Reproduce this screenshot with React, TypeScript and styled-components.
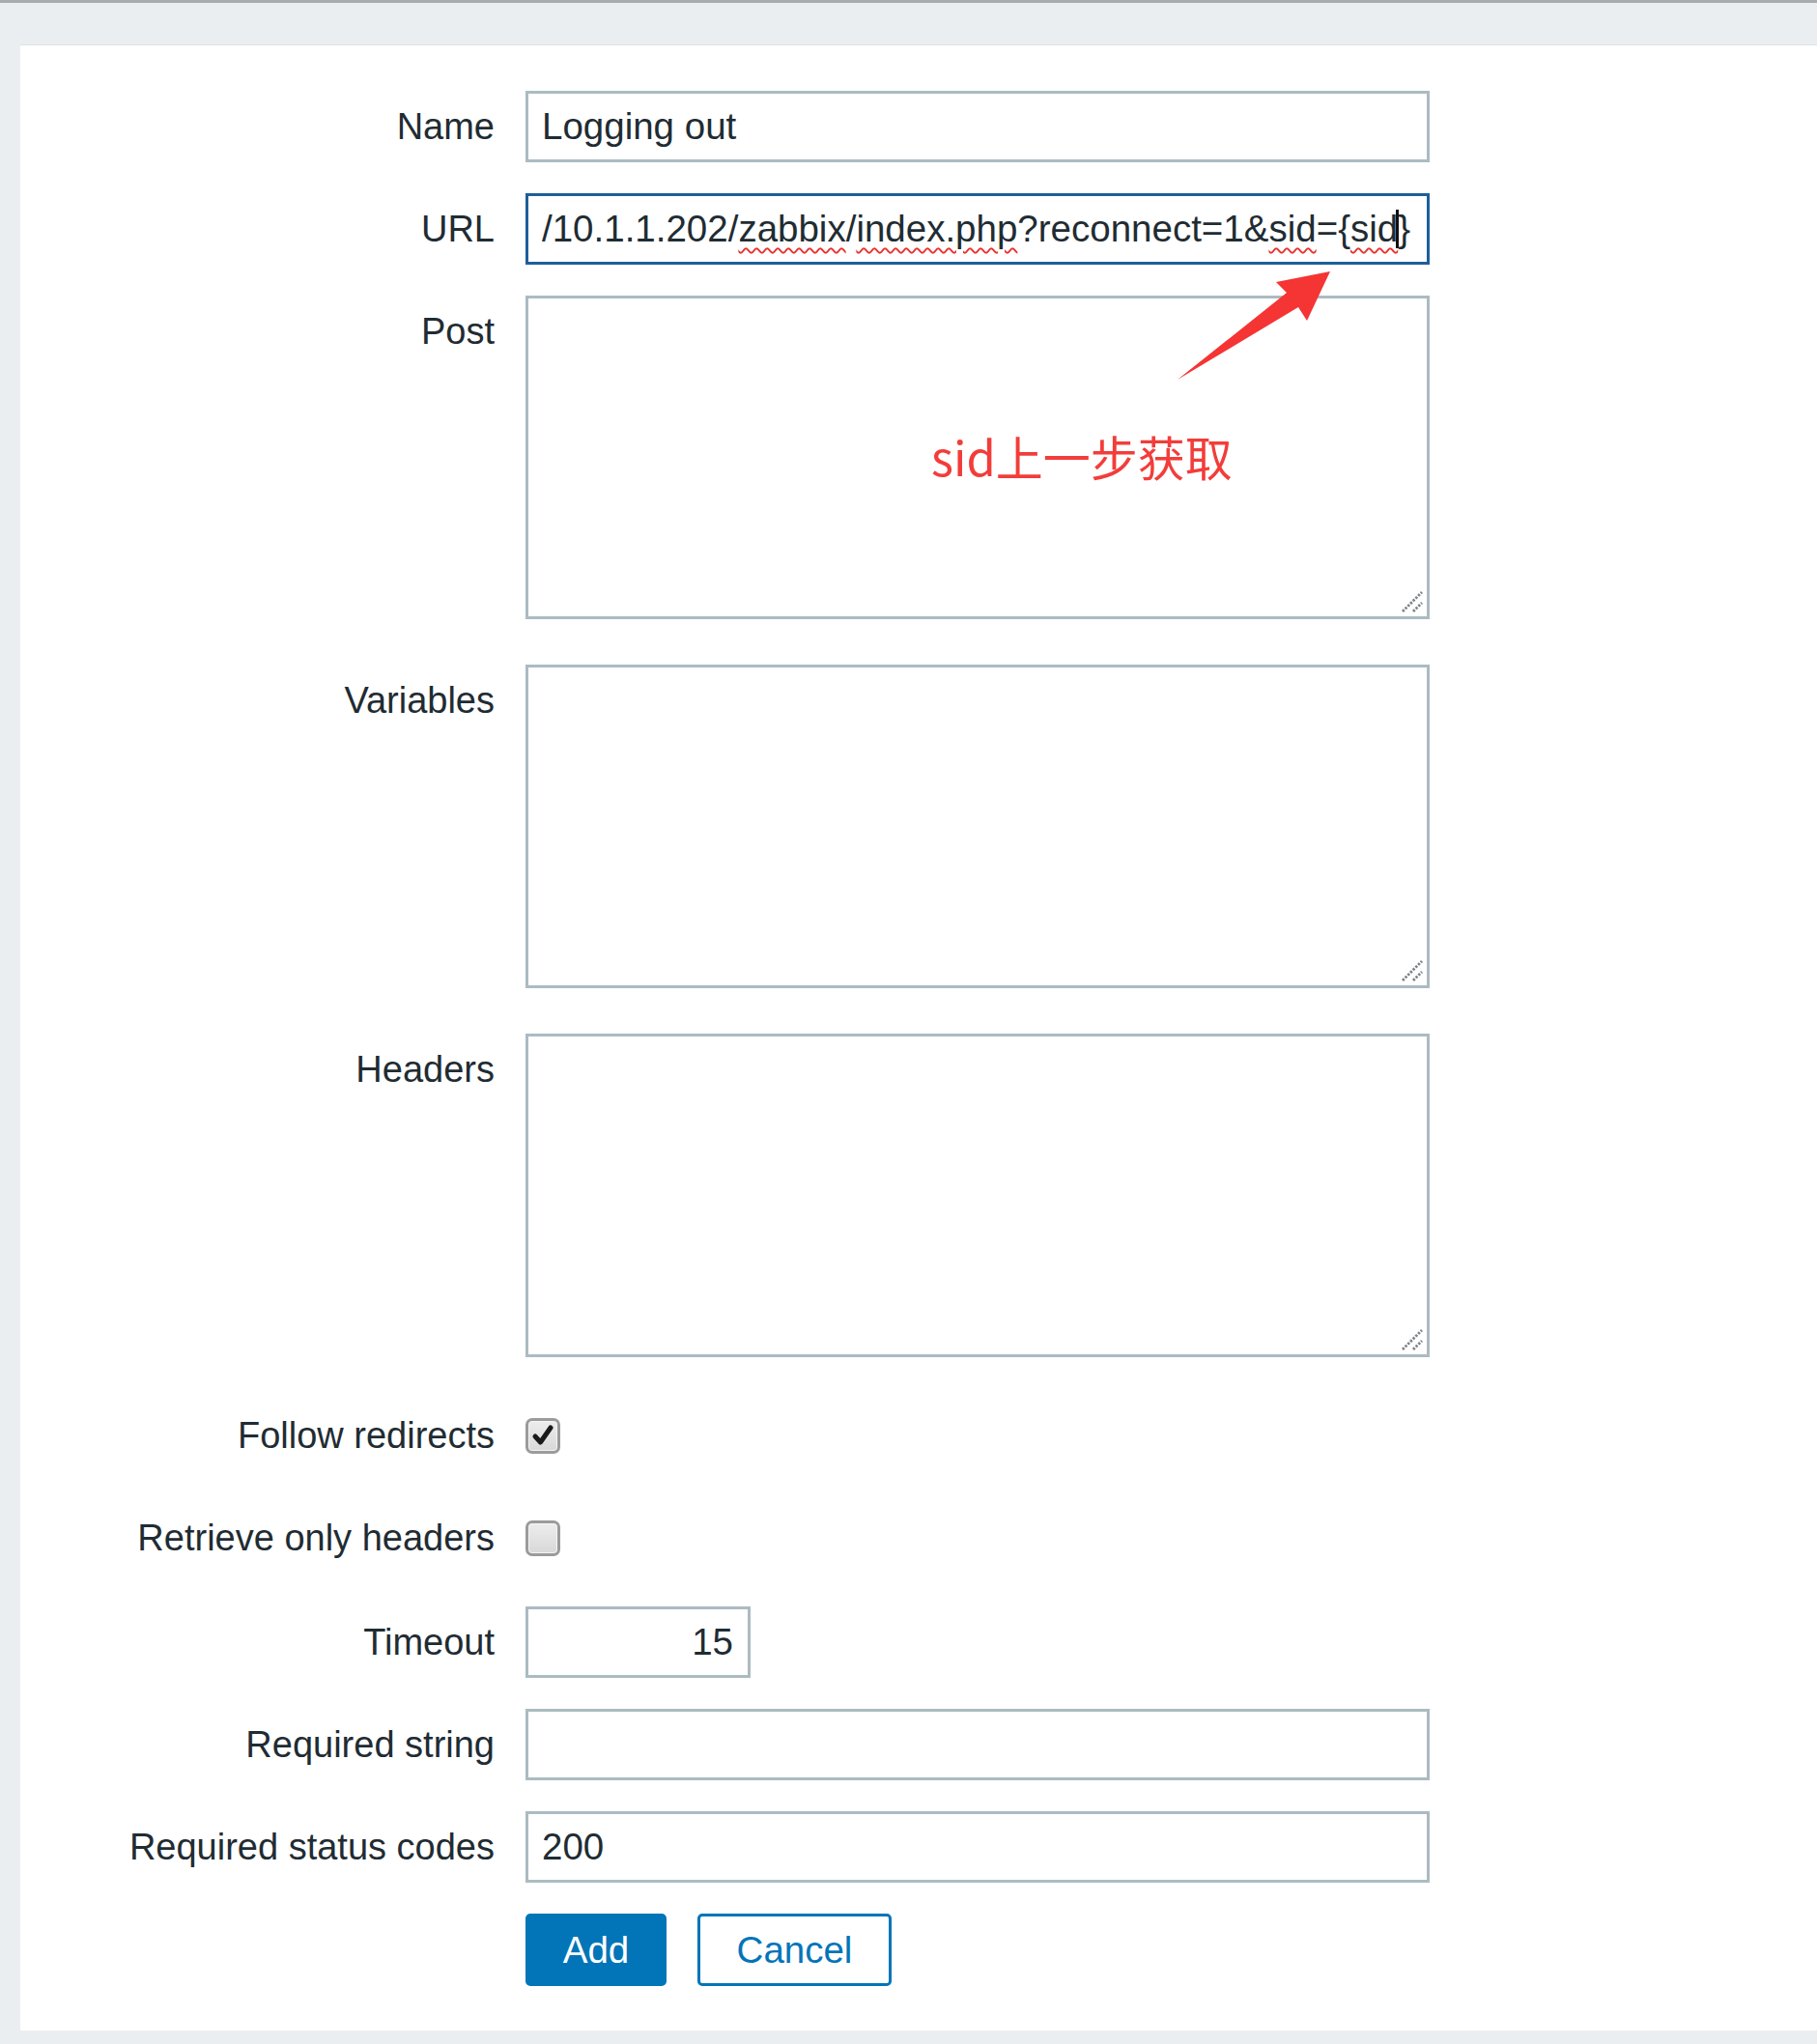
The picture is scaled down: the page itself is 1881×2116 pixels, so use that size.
import React from "react";
import styled, { createGlobalStyle } from "styled-components";

const GlobalStyle = createGlobalStyle`
  html, body {
    margin: 0;
    padding: 0;
    background: #ebeef0;
  }
  body {
    font-family: "Liberation Sans", Arial, sans-serif;
    color: #1f2c33;
  }
  * { box-sizing: border-box; }
`;

const Root = styled.div`
  position: relative;
  width: 1881px;
  min-height: 2116px;
`;

const TopLine = styled.div`
  height: 3px;
  background: #a9acae;
`;

const Page = styled.div`
  padding: 43px 0 13px 21px;
`;

const Panel = styled.div`
  background: #ffffff;
  border-top: 1px solid #dde2e5;
  padding: 47px 0 46px 0;
`;

const Form = styled.div`
  display: flex;
  flex-direction: column;
  gap: 32px;
`;

const Row = styled.div<{ $tall?: boolean; $extra?: number }>`
  display: grid;
  grid-template-columns: 491px 936px;
  column-gap: 32px;
  align-items: ${(p) => (p.$tall ? "start" : "center")};
  margin-bottom: ${(p) => (p.$extra ?? 0)}px;
`;

const Label = styled.div`
  text-align: right;
  font-size: 38px;
  line-height: 74px;
  color: #1f2c33;
  white-space: nowrap;
`;

const TextInput = styled.div<{ $focused?: boolean; $width?: number; $right?: boolean }>`
  width: ${(p) => (p.$width ? `${p.$width}px` : "100%")};
  height: 74px;
  border: 3px solid ${(p) => (p.$focused ? "#1d5f9c" : "#acbbc2")};
  background: #ffffff;
  display: flex;
  align-items: center;
  justify-content: ${(p) => (p.$right ? "flex-end" : "flex-start")};
  padding: 0 15px 0 14px;
  font-size: 38.5px;
  color: #1f2c33;
  white-space: nowrap;
  overflow: hidden;
`;

const Misspelled = styled.span`
  text-decoration: underline wavy #e8322e;
  text-decoration-thickness: 2px;
  text-underline-offset: 6px;
`;

const Caret = styled.span`
  display: inline-block;
  width: 0;
  height: 40px;
  border-left: 3px solid #111;
  vertical-align: middle;
  margin: 0 -1px 0 -2px;
`;

const TextArea = styled.div`
  position: relative;
  width: 936px;
  height: 335px;
  border: 3px solid #acbbc2;
  background: #ffffff;
`;

const Grip = styled.svg`
  position: absolute;
  right: 3px;
  bottom: 3px;
  width: 26px;
  height: 26px;
`;

const CheckRow = styled.div`
  height: 74px;
  display: flex;
  align-items: center;
`;

const CheckBox = styled.div`
  width: 36px;
  height: 37px;
  border: 3px solid #9b9b9b;
  border-radius: 7px;
  background: linear-gradient(#ededed, #d8d8d8);
  box-shadow: inset 0 0 0 1px #f4f4f4;
  display: flex;
  align-items: center;
  justify-content: center;
`;

const Buttons = styled.div`
  display: flex;
  gap: 32px;
`;

const Button = styled.button<{ $primary?: boolean; $width: number }>`
  width: ${(p) => p.$width}px;
  height: 75px;
  border-radius: 5px;
  border: 3px solid #0275b8;
  background: ${(p) => (p.$primary ? "#0275b8" : "#ffffff")};
  color: ${(p) => (p.$primary ? "#ffffff" : "#0275b8")};
  font-family: "Liberation Sans", Arial, sans-serif;
  font-size: 38.5px;
  padding: 0;
  cursor: pointer;
`;

const Arrow = styled.svg`
  position: absolute;
  left: 1215px;
  top: 278px;
  width: 165px;
  height: 118px;
`;

const Note = styled.div`
  position: absolute;
  left: 964px;
  top: 447px;
  font-family: "Noto Sans CJK SC", "Liberation Sans", sans-serif;
  font-size: 49px;
  line-height: 1;
  color: #f23d3a;
  white-space: nowrap;
`;

const GripIcon = () => (
  <Grip viewBox="0 0 26 26">
    <path d="M4 24 L24 4" stroke="#7d8286" strokeWidth="2.8" strokeDasharray="2.4 1.4" />
    <path d="M15 24 L24 15" stroke="#7d8286" strokeWidth="2.8" strokeDasharray="2.4 1.4" />
  </Grip>
);

const Area = () => (
  <TextArea>
    <GripIcon />
  </TextArea>
);

export default function App() {
  return (
    <Root>
      <GlobalStyle />
      <TopLine />
      <Page>
        <Panel>
          <Form>
            <Row>
              <Label>Name</Label>
              <TextInput>Logging out</TextInput>
            </Row>
            <Row>
              <Label>URL</Label>
              <TextInput $focused>
                /10.1.1.202/<Misspelled>zabbix</Misspelled>/<Misspelled>index.php</Misspelled>
                ?reconnect=1&amp;<Misspelled>sid</Misspelled>={"{"}
                <Misspelled>sid</Misspelled>
                <Caret />
                {"}"}
              </TextInput>
            </Row>
            <Row $tall $extra={15}>
              <Label>Post</Label>
              <Area />
            </Row>
            <Row $tall $extra={15}>
              <Label>Variables</Label>
              <Area />
            </Row>
            <Row $tall $extra={12}>
              <Label>Headers</Label>
              <Area />
            </Row>
            <Row>
              <Label>Follow redirects</Label>
              <CheckRow>
                <CheckBox>
                  <svg width="26" height="24" viewBox="0 0 26 24">
                    <path d="M5 13 L10.5 19 L21 4" fill="none" stroke="#1a1a1a" strokeWidth="5" strokeLinecap="round" strokeLinejoin="round" />
                  </svg>
                </CheckBox>
              </CheckRow>
            </Row>
            <Row $extra={2}>
              <Label>Retrieve only headers</Label>
              <CheckRow>
                <CheckBox />
              </CheckRow>
            </Row>
            <Row>
              <Label>Timeout</Label>
              <TextInput $width={233} $right>15</TextInput>
            </Row>
            <Row>
              <Label>Required string</Label>
              <TextInput />
            </Row>
            <Row>
              <Label>Required status codes</Label>
              <TextInput>200</TextInput>
            </Row>
            <Row>
              <div />
              <Buttons>
                <Button $primary $width={146}>Add</Button>
                <Button $width={201}>Cancel</Button>
              </Buttons>
            </Row>
          </Form>
        </Panel>
      </Page>
      <Arrow viewBox="1215 278 165 118">
        <path d="M1377 281 L1321 292 L1332 303 L1219 393 L1344 318 L1353 332 Z" fill="#f53434" />
      </Arrow>
      <Note>sid上一步获取</Note>
    </Root>
  );
}
